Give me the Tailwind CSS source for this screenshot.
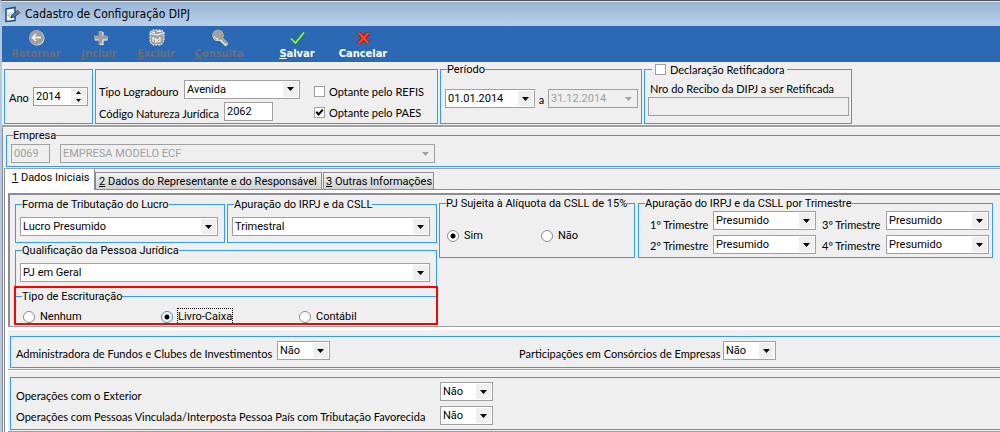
<!DOCTYPE html>
<html lang="pt-BR">
<head>
<meta charset="utf-8">
<title>Cadastro de Configuração DIPJ</title>
<script src="https://cdn.jsdelivr.net/npm/@tailwindcss/browser@4"></script>
</head>
<body class="min-h-screen bg-[#efefef] font-[Roboto,sans-serif] text-[11px] leading-[15px] text-black">
<svg class="hidden">
  <symbol id="arrow" viewBox="0 0 7 4"><path d="M0 0h7L3.5 4z" fill="currentColor"/></symbol>
  <symbol id="tick" viewBox="0 0 9 9"><path d="M1.2 3.8 3.6 6.4 7.8 1.6" fill="none" stroke="#000" stroke-width="2"/></symbol>
</svg>
<div class="min-h-screen border-t border-[#555] border-l-2 border-l-[#b4c9df]">
  <header class="flex h-[25px] items-center gap-1 border-t border-[#dbe6f1] bg-linear-to-b from-[#98b4d2] to-[#b9d0ea] pl-[2px] font-['DejaVu_Sans_Condensed',sans-serif] text-[12px]">
    <svg class="size-[17px]" viewBox="0 0 17 17"><path d="M2 3 11 1.500v13L2 15.500z" fill="#f8fcff" stroke="#1f4e86" stroke-width="1.500"/><path d="M3 6h6v4H3z" fill="#cfe4f6"/><path d="m4 8.500 2.500 3L9 8" fill="none" stroke="#e8c15a" stroke-width="1.500"/><path d="m7 12 3-1 5.500-4-2-2.500L8 9z" fill="#3f7cc4" stroke="#234a7d"/><path d="m13 4.500 3 3" stroke="#8a6a4a" stroke-width="2"/></svg>
    <h1>Cadastro de Configuração DIPJ</h1>
  </header>

  <nav class="flex h-9 items-start bg-[#2b69b5] pt-[3px] font-['DejaVu_Sans_Condensed',sans-serif] font-bold text-white">
    <button disabled class="flex w-[68px] flex-col items-center text-[#6a6f78]">
      <svg class="size-[17px]" viewBox="0 0 17 17"><circle cx="9" cy="9" r="7.500" fill="#fff"/><circle cx="8.500" cy="8.500" r="7.500" fill="#a0a0a0"/><path d="M13 8.500H5M8 5 4.500 8.500 8 12" fill="none" stroke="#fff" stroke-width="1.300"/></svg>
      <span>Retornar</span></button>
    <button disabled class="flex w-[58px] flex-col items-center text-[#6a6f78]">
      <svg class="size-[17px]" viewBox="0 0 17 17"><path d="M8.500 3h4v4.500h4v4h-4V16h-4v-4.500H4v-4h4.500z" fill="#fff"/><path d="M7.500 2h4v4.500H16v4h-4.500V15h-4v-4.500H3v-4h4.500z" fill="#a0a0a0"/></svg>
      <span><u>I</u>ncluir</span></button>
    <button disabled class="flex w-[56px] flex-col items-center text-[#6a6f78]">
      <svg class="size-[17px]" viewBox="0 0 17 17"><path d="M2 3 5 1h8l3 2v9l-3 4H5l-3-3z" fill="#a0a0a0" stroke="#fff" stroke-dasharray="2 1"/><path d="M2 4.500 9 6l7-2M4 3l3 .5M9 2.500h4M5 8v5M8 9v5M12 8v5M5 9l6 4M12 9l-5 4" fill="none" stroke="#fff"/></svg>
      <span><u>E</u>xcluir</span></button>
    <button disabled class="flex w-[70px] flex-col items-center text-[#6a6f78]">
      <svg class="size-[17px]" viewBox="0 0 17 17"><path d="m10 10 6 6" stroke="#fff" stroke-width="4"/><circle cx="7" cy="6.500" r="5.500" fill="#fff"/><circle cx="7" cy="6" r="5.500" fill="#a0a0a0"/><path d="m10 9 5.500 6" stroke="#a0a0a0" stroke-width="2.500"/><path d="M3.500 7c0 2 2 3.500 4 3" fill="none" stroke="#fff"/></svg>
      <span><u>C</u>onsulta</span></button>
    <button class="ml-[10px] flex w-[66px] flex-col items-center">
      <svg class="size-[17px]" viewBox="0 0 17 17"><path d="M2 9.500 6.500 14 15 3.500" fill="none" stroke="#2c8a2c" stroke-width="3"/><path d="M2 9.500 6.500 14 15 3.500" fill="none" stroke="#8bf07a" stroke-width="1.600"/></svg>
      <span><u>S</u>alvar</span></button>
    <button class="flex w-[66px] flex-col items-center">
      <svg class="size-[17px]" viewBox="0 0 17 17"><path d="m4 4 9 10M13.500 4 4 14" fill="none" stroke="#9c1c10" stroke-width="4"/><path d="m4 4 9 10M13.500 4 4 14" fill="none" stroke="#ff4326" stroke-width="2.500"/></svg>
      <span>Cancelar</span></button>
  </nav>

  <section class="flex items-start gap-[2px] border-b-2 border-[#a0a0a0] pb-px pl-[2px] font-[Lato,sans-serif] [&_input]:font-[Roboto,sans-serif] [&_select]:font-[Roboto,sans-serif]">
    <div class="mt-[7px] flex h-[55px] w-[89px] items-start border border-[#3399ff] pl-1 pt-[17px]">
      <label for="ano" class="w-6 pt-[3px]">Ano</label>
      <div class="flex h-[19px] w-[55px] border border-[#a0a0a0] bg-white pr-px">
        <input id="ano" type="text" inputmode="numeric" value="2014" class="w-0 grow pl-[2px] outline-none">
        <div class="flex flex-col gap-px py-px">
          <button aria-label="Aumentar ano" class="flex h-[7px] w-[15px] items-center justify-center bg-[#efefef]"><svg class="h-[3px] w-[5px] rotate-180"><use href="#arrow"/></svg></button>
          <button aria-label="Diminuir ano" class="flex h-[7px] w-[15px] items-center justify-center bg-[#efefef]"><svg class="h-[3px] w-[5px]"><use href="#arrow"/></svg></button>
        </div>
      </div>
    </div>

    <div class="mt-[7px] flex h-[55px] w-[343px] border border-[#3399ff] pl-[3px] pt-[9px]">
      <div class="flex w-[215px] flex-col gap-[3px]">
        <div class="flex items-center">
          <label for="logr" class="w-[85px] whitespace-nowrap pt-[5px]">Tipo Logradouro</label>
          <div class="relative w-[116px]">
            <select id="logr" class="block h-[19px] w-full appearance-none border border-[#a0a0a0] bg-white pl-[2px]"><option>Avenida</option></select>
            <span class="pointer-events-none absolute inset-y-[2px] right-[2px] flex w-[15px] items-center justify-center bg-[#efefef]"><svg class="h-1 w-[7px]"><use href="#arrow"/></svg></span>
          </div>
        </div>
        <div class="flex items-center">
          <label for="natureza" class="w-[125px] whitespace-nowrap pt-[3px]">Código Natureza Jurídica</label>
          <input id="natureza" type="text" value="2062" class="h-[19px] w-[49px] border border-[#a0a0a0] bg-white pl-[2px]">
        </div>
      </div>
      <div class="flex flex-col gap-[6px] pt-[5px]">
        <label class="flex items-center gap-1"><span class="relative size-[11px]"><input type="checkbox" class="peer block size-[11px] appearance-none border border-[#a0a0a0] bg-white"><svg class="pointer-events-none absolute left-px top-px hidden size-[9px] peer-checked:block"><use href="#tick"/></svg></span>Optante pelo REFIS</label>
        <label class="flex items-center gap-1"><span class="relative size-[11px]"><input type="checkbox" checked class="peer block size-[11px] appearance-none border border-[#a0a0a0] bg-white"><svg class="pointer-events-none absolute left-px top-px hidden size-[9px] peer-checked:block"><use href="#tick"/></svg></span>Optante pelo PAES</label>
      </div>
    </div>

    <fieldset class="h-[62px] w-[202px] border border-[#3399ff] pl-1">
      <legend class="ml-[2px] font-[Roboto,sans-serif]">Período</legend>
      <div class="flex items-center pt-3">
        <div class="relative w-[90px]">
          <select aria-label="Data inicial" class="block h-[19px] w-full appearance-none border border-[#a0a0a0] bg-white pl-[2px]"><option>01.01.2014</option></select>
          <span class="pointer-events-none absolute inset-y-[2px] right-[2px] flex w-[15px] items-center justify-center bg-[#efefef]"><svg class="h-1 w-[7px]"><use href="#arrow"/></svg></span>
        </div>
        <span class="w-[13px] text-center pt-px">a</span>
        <div class="relative w-[90px]">
          <select aria-label="Data final" disabled class="block h-[19px] w-full appearance-none border border-[#a0a0a0] bg-[#efefef] pl-[2px] text-[#a0a0a0] opacity-100"><option>31.12.2014</option></select>
          <span class="pointer-events-none absolute inset-y-[2px] right-[2px] flex w-[15px] items-center justify-center text-[#a0a0a0]"><svg class="h-1 w-[7px]"><use href="#arrow"/></svg></span>
        </div>
      </div>
    </fieldset>

    <fieldset class="h-[62px] w-[208px] border border-[#3399ff] pl-[3px]">
      <legend class="ml-[4px] px-[3px]"><label class="flex items-center gap-1"><span class="relative size-[11px]"><input type="checkbox" class="peer block size-[11px] appearance-none border border-[#a0a0a0] bg-white"><svg class="pointer-events-none absolute left-px top-px hidden size-[9px] peer-checked:block"><use href="#tick"/></svg></span>Declaração Retificadora</label></legend>
      <label for="recibo" class="block pb-px pl-[2px] pt-1">Nro do Recibo da DIPJ a ser Retificada</label>
      <input id="recibo" type="text" disabled class="block h-[19px] w-[201px] border border-[#a0a0a0]">
    </fieldset>
  </section>

  <main class="border-l border-t border-t-white border-l-[#8c8c94] pl-px">
    <fieldset class="ml-[2px] h-[39px] border border-r-0 border-[#3399ff] pl-1">
      <legend class="ml-[2px]">Empresa</legend>
      <div class="flex items-center gap-[10px] pt-px">
        <input aria-label="Código da empresa" type="text" disabled value="0069" class="h-[19px] w-[39px] border border-[#a0a0a0] pl-[2px] text-[#a0a0a0]">
        <div class="relative w-[375px]">
          <select aria-label="Empresa" disabled class="block h-[19px] w-full appearance-none border border-[#a0a0a0] bg-[#efefef] pl-[2px] text-[#a0a0a0] opacity-100"><option>EMPRESA MODELO ECF</option></select>
          <span class="pointer-events-none absolute inset-y-[2px] right-[2px] flex w-[15px] items-center justify-center text-[#a0a0a0]"><svg class="h-1 w-[7px]"><use href="#arrow"/></svg></span>
        </div>
      </div>
    </fieldset>

    <div role="tablist" class="mt-px flex items-end border-t border-l border-t-[#a0a0a0] border-l-[#8c8c94]">
      <button role="tab" aria-selected="true" class="h-[21px] w-[90px] border-r border-[#8c8c94] bg-white text-left pl-[7px] pb-1"><u>1</u> Dados Iniciais</button>
      <div class="flex grow items-end gap-px border-b border-[#8c8c94]">
        <button role="tab" class="h-[17px] w-[227px] whitespace-nowrap border-x border-t border-[#8c8c94] bg-linear-to-b from-[#f2f2f2] to-[#d2d2d2] text-left pl-[3px]"><u>2</u> Dados do Representante e do Responsável</button>
        <button role="tab" class="h-[17px] w-[111px] whitespace-nowrap border-x border-t border-[#8c8c94] bg-linear-to-b from-[#f2f2f2] to-[#d2d2d2] text-left pl-[2px]"><u>3</u> Outras Informações</button>
      </div>
    </div>

    <div class="border-l border-[#8c8c94]">
    <div class="border-t-[3px] border-l-[3px] border-white">
      <section role="tabpanel" class="flex h-[134px] items-start border-b border-l-2 border-t-2 border-b-[#a0a0a0] border-l-[#8c8c94] border-t-[#8c8c94] pl-[5px] pt-px">
        <div class="w-[422px] pt-px">
          <div class="flex gap-[2px]">
            <fieldset class="h-[46px] w-[210px] border border-[#3399ff] pl-1">
              <legend class="ml-[2px]">Forma de Tributação do Lucro</legend>
              <div class="relative mt-[5px] w-[198px]">
                <select aria-label="Forma de Tributação do Lucro" class="block h-[19px] w-full appearance-none border border-[#a0a0a0] bg-white pl-[2px]"><option>Lucro Presumido</option></select>
                <span class="pointer-events-none absolute inset-y-[2px] right-[2px] flex w-[15px] items-center justify-center bg-[#efefef]"><svg class="h-1 w-[7px]"><use href="#arrow"/></svg></span>
              </div>
            </fieldset>
            <fieldset class="h-[46px] w-[210px] border border-[#3399ff] pl-1">
              <legend class="ml-[2px]">Apuração do IRPJ e da CSLL</legend>
              <div class="relative mt-[5px] w-[198px]">
                <select aria-label="Apuração do IRPJ e da CSLL" class="block h-[19px] w-full appearance-none border border-[#a0a0a0] bg-white pl-[2px]"><option>Trimestral</option></select>
                <span class="pointer-events-none absolute inset-y-[2px] right-[2px] flex w-[15px] items-center justify-center bg-[#efefef]"><svg class="h-1 w-[7px]"><use href="#arrow"/></svg></span>
              </div>
            </fieldset>
          </div>
          <fieldset class="h-[46px] border border-b-0 border-[#3399ff] pl-1">
            <legend class="ml-[2px]">Qualificação da Pessoa Jurídica</legend>
            <div class="relative mt-[5px] w-[410px]">
              <select aria-label="Qualificação da Pessoa Jurídica" class="block h-[19px] w-full appearance-none border border-[#a0a0a0] bg-white pl-[2px]"><option>PJ em Geral</option></select>
              <span class="pointer-events-none absolute inset-y-[2px] right-[2px] flex w-[15px] items-center justify-center bg-[#efefef]"><svg class="h-1 w-[7px]"><use href="#arrow"/></svg></span>
            </div>
          </fieldset>
          <div class="relative">
            <fieldset class="h-9 border border-b-0 border-[#3399ff] pl-[7px]">
              <legend class="-ml-px">Tipo de Escrituração</legend>
              <div class="flex pt-[5px]">
                <label class="flex w-[138px] items-center gap-[5px]"><input type="radio" name="escrituracao" class="size-3 appearance-none rounded-full border border-[#8c8c8c] bg-white checked:border-[#3c8fd8] checked:bg-[radial-gradient(#000_2px,#fff_3px)]">Nenhum</label>
                <label class="flex w-[138px] items-center gap-[5px]"><input type="radio" name="escrituracao" checked class="size-3 appearance-none rounded-full border border-[#8c8c8c] bg-white checked:border-[#3c8fd8] checked:bg-[radial-gradient(#000_2px,#fff_3px)]"><span class="outline-1 outline-dotted outline-black">Livro-Caixa</span></label>
                <label class="flex items-center gap-[5px]"><input type="radio" name="escrituracao" class="size-3 appearance-none rounded-full border border-[#8c8c8c] bg-white checked:border-[#3c8fd8] checked:bg-[radial-gradient(#000_2px,#fff_3px)]">Contábil</label>
              </div>
            </fieldset>
            <div class="pointer-events-none absolute -inset-x-px -top-[3px] bottom-0 border-2 border-[#ff0000]"></div>
          </div>
        </div>

        <fieldset class="ml-[2px] h-[62px] w-[196px] border border-[#3399ff] pl-[7px]">
          <legend class="-ml-px whitespace-nowrap">PJ Sujeita à Alíquota da CSLL de 15%</legend>
          <div class="flex pt-[17px]">
            <label class="flex w-[94px] items-center gap-[5px]"><input type="radio" name="aliquota" checked class="size-3 appearance-none rounded-full border border-[#8c8c8c] bg-white checked:bg-[radial-gradient(#000_2px,#fff_3px)]">Sim</label>
            <label class="flex items-center gap-[5px]"><input type="radio" name="aliquota" class="size-3 appearance-none rounded-full border border-[#8c8c8c] bg-white checked:bg-[radial-gradient(#000_2px,#fff_3px)]">Não</label>
          </div>
        </fieldset>

        <fieldset class="ml-[3px] mr-[7px] h-[62px] min-w-0 grow border border-[#3399ff] pl-[11px]">
          <legend class="-ml-[5px]">Apuração do IRPJ e da CSLL por Trimestre</legend>
          <div class="grid grid-cols-[63px_103px_70px_103px] items-start gap-y-[3px] font-[Lato,sans-serif] [&_select]:font-[Roboto,sans-serif]">
            <label for="t1" class="pt-[6px]">1º Trimestre</label>
            <div class="relative">
              <select id="t1" class="block h-[19px] w-full appearance-none border border-[#a0a0a0] bg-white pl-[2px]"><option>Presumido</option></select>
              <span class="pointer-events-none absolute inset-y-[2px] right-[2px] flex w-[15px] items-center justify-center bg-[#efefef]"><svg class="h-1 w-[7px]"><use href="#arrow"/></svg></span>
            </div>
            <label for="t3" class="pl-[6px] pt-[6px]">3º Trimestre</label>
            <div class="relative">
              <select id="t3" class="block h-[19px] w-full appearance-none border border-[#a0a0a0] bg-white pl-[2px]"><option>Presumido</option></select>
              <span class="pointer-events-none absolute inset-y-[2px] right-[2px] flex w-[15px] items-center justify-center bg-[#efefef]"><svg class="h-1 w-[7px]"><use href="#arrow"/></svg></span>
            </div>
            <label for="t2" class="pt-[3px]">2º Trimestre</label>
            <div class="relative">
              <select id="t2" class="block h-[19px] w-full appearance-none border border-[#a0a0a0] bg-white pl-[2px]"><option>Presumido</option></select>
              <span class="pointer-events-none absolute inset-y-[2px] right-[2px] flex w-[15px] items-center justify-center bg-[#efefef]"><svg class="h-1 w-[7px]"><use href="#arrow"/></svg></span>
            </div>
            <label for="t4" class="pl-[6px] pt-[3px]">4º Trimestre</label>
            <div class="relative">
              <select id="t4" class="block h-[19px] w-full appearance-none border border-[#a0a0a0] bg-white pl-[2px]"><option>Presumido</option></select>
              <span class="pointer-events-none absolute inset-y-[2px] right-[2px] flex w-[15px] items-center justify-center bg-[#efefef]"><svg class="h-1 w-[7px]"><use href="#arrow"/></svg></span>
            </div>
          </div>
        </fieldset>
      </section>
    </div>

    <div class="border-l-[3px] border-t-[3px] border-white font-[Lato,sans-serif] [&_select]:font-[Roboto,sans-serif]">
      <section class="border-b border-[#a0a0a0] pb-px pl-[2px] pt-[6px]">
        <div class="flex h-8 items-start border border-r-0 border-[#3399ff] pl-[5px] pt-1">
          <label for="adm" class="w-[261px] whitespace-nowrap pt-[5px]">Administradora de Fundos e Clubes de Investimentos</label>
          <div class="relative w-[53px]">
            <select id="adm" class="block h-[19px] w-full appearance-none border border-[#a0a0a0] bg-white pl-[2px]"><option>Não</option></select>
            <span class="pointer-events-none absolute inset-y-[2px] right-[2px] flex w-[15px] items-center justify-center bg-[#efefef]"><svg class="h-1 w-[7px]"><use href="#arrow"/></svg></span>
          </div>
          <label for="part" class="ml-[189px] w-[204px] whitespace-nowrap pt-[5px]">Participações em Consórcios de Empresas</label>
          <div class="relative w-[53px]">
            <select id="part" class="block h-[19px] w-full appearance-none border border-[#a0a0a0] bg-white pl-[2px]"><option>Não</option></select>
            <span class="pointer-events-none absolute inset-y-[2px] right-[2px] flex w-[15px] items-center justify-center bg-[#efefef]"><svg class="h-1 w-[7px]"><use href="#arrow"/></svg></span>
          </div>
        </div>
      </section>
      <section class="border-b border-t border-b-[#a0a0a0] border-t-white pb-px pl-[2px] pt-[6px]">
        <div class="grid h-[53px] grid-cols-[424px_53px] content-start items-start gap-y-[3px] border border-r-0 border-[#3399ff] pl-[5px] pt-1">
          <label for="ext" class="pt-[6px]">Operações com o Exterior</label>
          <div class="relative">
            <select id="ext" class="block h-[19px] w-full appearance-none border border-[#a0a0a0] bg-white pl-[2px]"><option>Não</option></select>
            <span class="pointer-events-none absolute inset-y-[2px] right-[2px] flex w-[15px] items-center justify-center bg-[#efefef]"><svg class="h-1 w-[7px]"><use href="#arrow"/></svg></span>
          </div>
          <label for="vinc" class="whitespace-nowrap pt-[3px]">Operações com Pessoas Vinculada/Interposta Pessoa País com Tributação Favorecida</label>
          <div class="relative">
            <select id="vinc" class="block h-[19px] w-full appearance-none border border-[#a0a0a0] bg-white pl-[2px]"><option>Não</option></select>
            <span class="pointer-events-none absolute inset-y-[2px] right-[2px] flex w-[15px] items-center justify-center bg-[#efefef]"><svg class="h-1 w-[7px]"><use href="#arrow"/></svg></span>
          </div>
        </div>
      </section>
    </div>
    </div>
  </main>
</div>
</body>
</html>
